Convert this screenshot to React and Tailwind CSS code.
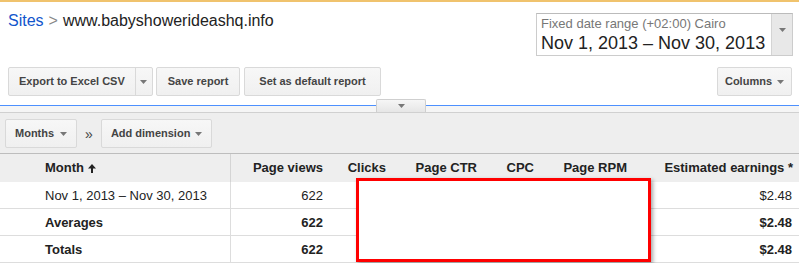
import React from 'react';

const Caret = ({ className = '' }) => (
  <svg width="7" height="4" viewBox="0 0 7 4" className={className}>
    <path d="M0 0 L7 0 L3.5 4 Z" fill="#777" />
  </svg>
);

const UpArrow = () => (
  <svg width="8" height="9" viewBox="0 0 8 9" className="ml-[4px] mt-[1px]">
    <path d="M4 0 L8 4.5 L5 4.5 L5 9 L3 9 L3 4.5 L0 4.5 Z" fill="#222" />
  </svg>
);

const btn =
  'h-[29px] flex items-center border border-[#d9d9d9] rounded-[2px] bg-gradient-to-b from-[#f7f7f7] to-[#f0f0f0] text-[#444] text-[11px] font-bold whitespace-nowrap';

const cols = 'grid grid-cols-[231px_99px_63px_91px_57px_93px_165px]';

const rows = [
  { label: 'Nov 1, 2013 – Nov 30, 2013', views: '622', earn: '$2.48', bold: false },
  { label: 'Averages', views: '622', earn: '$2.48', bold: true },
  { label: 'Totals', views: '622', earn: '$2.48', bold: true },
];

export default function App() {
  return (
    <div className="relative w-[799px] h-[263px] overflow-hidden bg-white font-['Liberation_Sans',Arial,sans-serif]">
      <div className="h-[2px] bg-[#f0c36d]" />

      {/* header */}
      <div className="h-[65px] flex items-start">
        <div className="ml-[8px] mt-[9px] text-[16px] leading-[20px] text-[#222]">
          <span className="text-[#1155cc]">Sites</span>
          <span className="text-[#888] mx-[5px]">&gt;</span>
          <span>www.babyshowerideashq.info</span>
        </div>
        <div className="ml-auto mr-[6px] mt-[11px] w-[257px] h-[43px] flex border border-[#ccc] border-t-[#bbb]">
          <div className="flex-1 pl-[4px] pt-[2px] whitespace-nowrap overflow-hidden">
            <div className="text-[13px] leading-[15px] text-[#777]">Fixed date range (+02:00) Cairo</div>
            <div className="text-[18px] leading-[22px] text-[#222] mt-[1px]">Nov 1, 2013 – Nov 30, 2013</div>
          </div>
          <div className="w-[21px] shrink-0 bg-[#e8e8e8] border-l border-[#d4d4d4] flex justify-center pt-[14px]">
            <Caret />
          </div>
        </div>
      </div>

      {/* action buttons */}
      <div className="flex items-center h-[29px] px-[8px]">
        <div className={btn}>
          <span className="pl-[10px] pr-[10px]">Export to Excel CSV</span>
          <span className="h-full w-[17px] border-l border-[#d9d9d9] flex items-center justify-center">
            <Caret />
          </span>
        </div>
        <div className={`${btn} ml-[3px] px-[11px]`}>Save report</div>
        <div className={`${btn} ml-[4px] px-[14px]`}>Set as default report</div>
        <div className={`${btn} ml-auto mr-[-1px] px-[7px] text-[11.5px]`}>
          Columns
          <Caret className="ml-[5px]" />
        </div>
      </div>

      {/* divider with collapse tab */}
      <div className="relative mt-[9px]">
        <div className="h-[1px] bg-[#4d90fe]" />
        <div className="h-[6px] bg-[#f5f5f5]" />
        <div className="h-[1px] bg-[#d0d0d0]" />
        <div className="absolute left-[376px] top-[-6px] w-[50px] h-[13px] border border-b-0 border-[#cfcfcf] rounded-t-[2px] bg-gradient-to-b from-[#f6f6f6] to-[#e6e6e6] flex justify-center pt-[4px]">
          <Caret />
        </div>
      </div>

      {/* dimension toolbar */}
      <div className="h-[41px] bg-[#eeeeee] flex items-start pt-[6px] pl-[5px] border-b border-[#bdbdbd]">
        <div className={`${btn} px-[9px]`}>
          Months
          <Caret className="ml-[6px]" />
        </div>
        <span className="mx-[8px] mt-[5px] text-[14px] text-[#444]">»</span>
        <div className={`${btn} px-[9px]`}>
          Add dimension
          <Caret className="ml-[5px]" />
        </div>
      </div>

      {/* table */}
      <div className={`${cols} h-[28px] bg-[#eeeeee] text-[13px] font-bold text-[#222] items-center`}>
        <div className="h-full flex items-center pl-[45px] border-r border-[#d4d4d4]">
          Month
          <UpArrow />
        </div>
        <div className="text-right pr-[7px]">Page views</div>
        <div className="text-right pr-[7px]">Clicks</div>
        <div className="text-right pr-[7px]">Page CTR</div>
        <div className="text-right pr-[7px]">CPC</div>
        <div className="text-right pr-[7px]">Page RPM</div>
        <div className="text-right pr-[6px]">Estimated earnings *</div>
      </div>
      {rows.map((r) => (
        <div
          key={r.label}
          className={`${cols} h-[27px] border-b border-[#dddddd] text-[13px] text-[#222] items-center ${r.bold ? 'font-bold' : ''}`}
        >
          <div className="h-full flex items-center pt-[2px] pl-[45px] border-r border-[#dddddd]">{r.label}</div>
          <div className="text-right pr-[7px] mt-[2px]">{r.views}</div>
          <div />
          <div />
          <div />
          <div />
          <div className="text-right pr-[7px] mt-[2px]">{r.earn}</div>
        </div>
      ))}

      {/* red highlight box */}
      <div className="absolute left-[356px] top-[178px] w-[295px] h-[84px] border-[3px] border-[#ff0000] bg-white shadow-[2px_2px_4px_rgba(0,0,0,0.35)]" />
    </div>
  );
}
